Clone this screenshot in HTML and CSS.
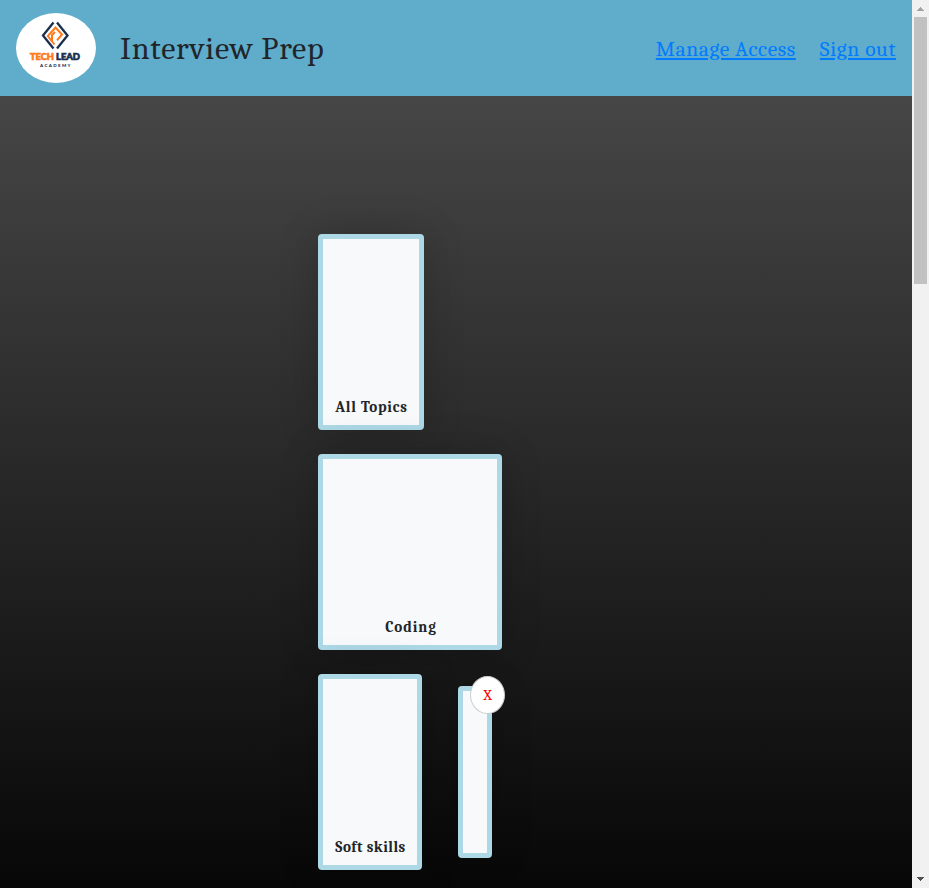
FILE: index.html
```html
<!DOCTYPE html>
<html lang="en">
<head>
<meta charset="utf-8">
<title>Interview Prep</title>
<link rel="stylesheet" href="styles.css">
</head>
<body>
<div class="page">
  <header class="header">
    <svg class="logo" viewBox="0 0 80 70" role="img" aria-label="Tech Lead Academy">
      <ellipse cx="40" cy="35" rx="40" ry="35" fill="#fff"/>
      <g fill="none" stroke-width="2.300">
        <path d="M37.500 9.500 27 22.500 37.500 35.500M41 9.500 51.500 22.500 41 35.500" stroke="#1c2f4f"/>
        <path d="M38.500 31.500 31.800 23 39.500 14.500 46 21.500 41 27.300M36 28V22L39 19" stroke="#ff7a1a" stroke-width="2"/>
      </g>
      <text class="logo-name" x="14" y="47" textLength="24" lengthAdjust="spacingAndGlyphs" fill="#ff7a1a" stroke="#ff7a1a">TECH</text>
      <text class="logo-name" x="40" y="47" textLength="24" lengthAdjust="spacingAndGlyphs" fill="#1c2f4f" stroke="#1c2f4f">LEAD</text>
      <text class="logo-sub" x="24" y="53.500" textLength="30.500">ACADEMY</text>
    </svg>
    <h1 class="title">Interview Prep</h1>
    <nav class="nav">
      <a class="link" href="#">Manage Access</a>
      <a class="link" href="#">Sign out</a>
    </nav>
  </header>
  <main class="topics">
    <div class="row"><section class="card all"><span>All Topics</span></section></div>
    <div class="row"><section class="card coding"><span>Coding</span></section></div>
    <div class="row">
      <section class="card soft"><span>Soft skills</span></section>
      <section class="card empty"><button class="close">X</button></section>
    </div>
  </main>
</div>
<aside class="scrollbar">
  <svg width="17" height="17"><path d="M5 11h7v-1h-1V9h-1V8H9V7H8v1H7v1H6v1H5z" fill="#a3a3a3"/></svg>
  <div class="thumb"></div>
  <svg width="17" height="17"><path d="M5 6h7v1h-1v1h-1v1H9v1H8V9H7V8H6V7H5z" fill="#505050"/></svg>
</aside>
</body>
</html>
```

FILE: styles.css
```css
* { box-sizing: border-box; }
body {
  margin: 0;
  height: 888px;
  display: flex;
  overflow: hidden;
  font-family: Cambria, Caladea, "DejaVu Serif Condensed", "Liberation Serif", serif;
  color: #212529;
}
.page {
  width: 912px;
  height: 888px;
  overflow: hidden;
  display: flex;
  flex-direction: column;
}
.header {
  height: 96px;
  flex: none;
  padding: 0 16px;
  display: flex;
  align-items: center;
  background: #5faccb;
}
.logo { width: 80px; height: 70px; }
.logo-name { font: 900 9px Lato, sans-serif; stroke-width: .7px; }
.logo-sub { font: 900 4.500px Lato, sans-serif; fill: #1c2f4f; }
.title { margin: 0 0 0 24px; padding-top: 2px; font-size: 32px; font-weight: 400; line-height: 40px; letter-spacing: .75px; white-space: nowrap; }
.nav { margin-left: auto; padding-top: 2px; display: flex; gap: 24px; }
.link { color: #007bff; font-size: 21.500px; line-height: 32px; letter-spacing: .6px; text-underline-offset: 2px; text-decoration-thickness: 2px; white-space: nowrap; }
.topics {
  height: 792px;
  flex: none;
  padding: 138px 0 0 318px;
  display: flex;
  flex-direction: column;
  gap: 24px;
  background: linear-gradient(#464646, #070707);
}
.row { display: flex; align-items: center; gap: 36px; }
.card {
  position: relative;
  height: 196px;
  border: 5px solid #add8e6;
  border-radius: 4px;
  background: #f8f9fa;
  display: flex;
  justify-content: center;
  align-items: flex-end;
  padding: 0 0 6px 1px;
  box-shadow: 0 0 40px rgba(0, 0, 0, .2);
  font-size: 15px;
  line-height: 24px;
  font-weight: 700;
  letter-spacing: .5px;
  white-space: nowrap;
}
.all { width: 106px; letter-spacing: .8px; }
.coding { width: 184px; padding-left: 2px; letter-spacing: .9px; }
.soft { width: 104px; }
.empty { width: 34px; height: 172px; }
.close {
  position: absolute;
  top: -15px;
  left: 7px;
  width: 35px;
  height: 38px;
  padding: 0;
  border: 1px solid #ccc;
  border-radius: 50%;
  background: #fff;
  color: red;
  font: 400 15px Cambria, Caladea, "Liberation Serif", serif;
}
.scrollbar { width: 17px; height: 888px; background: #f1f1f1; display: flex; flex-direction: column; }
.scrollbar svg { display: block; flex: none; }
.scrollbar svg:last-child { margin-top: auto; }
.thumb { width: 13px; height: 267px; margin-left: 2px; background: #c1c1c1; }
```
